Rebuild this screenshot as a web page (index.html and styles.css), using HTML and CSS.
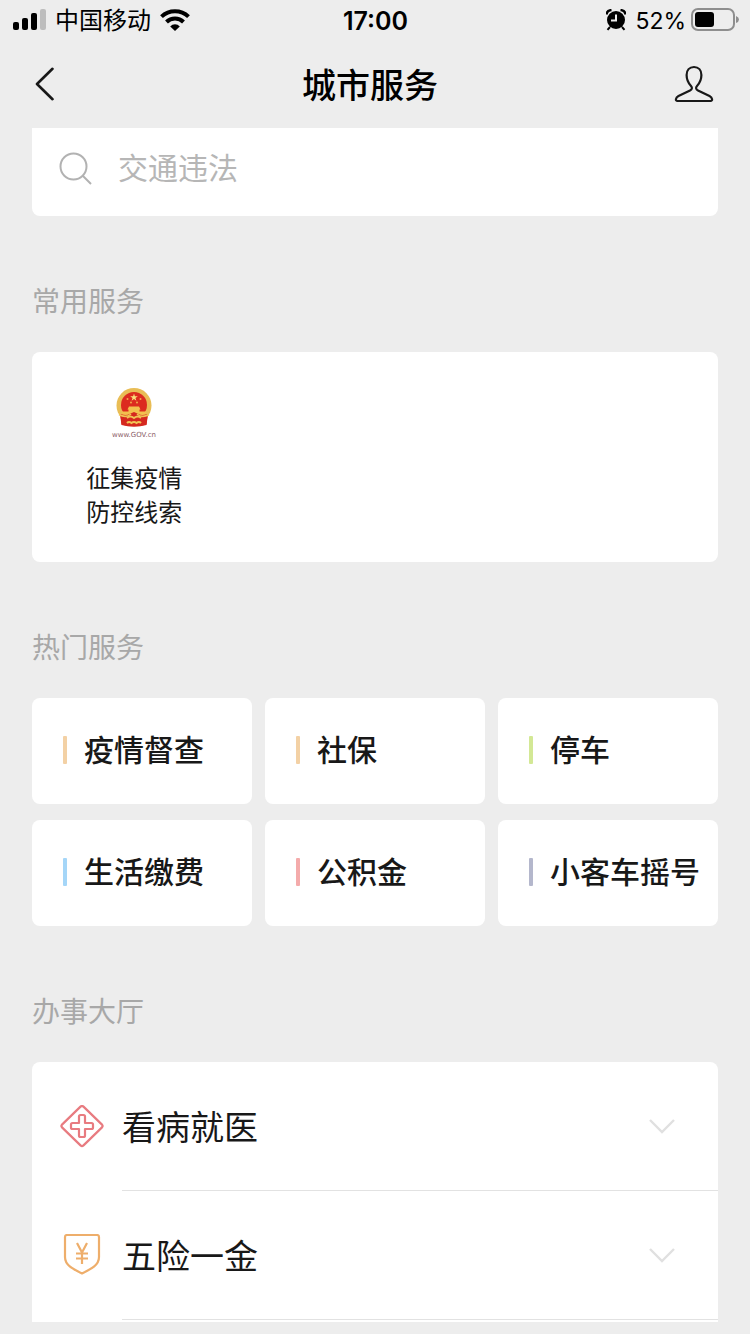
FILE: index.html
```html
<!DOCTYPE html>
<html lang="zh-CN">
<head>
    <meta charset="UTF-8">
    <meta name="viewport" content="width=device-width, initial-scale=1.0">
    <title>城市服务</title>
    <link rel="stylesheet" href="styles.css">
</head>
<body>
    <!-- Status bar -->
    <div class="status-bar">
        <div class="status-left">
            <svg class="signal" width="34" height="24" viewBox="0 0 34 24" aria-hidden="true">
                <rect x="1" y="14" width="6" height="8" rx="2"/>
                <rect x="10" y="10" width="6" height="12" rx="2"/>
                <rect x="19" y="5" width="6" height="17" rx="2"/>
                <rect x="28" y="1" width="6" height="21" rx="2" fill="#bdbdbd"/>
            </svg>
            <span class="carrier">中国移动</span>
            <svg width="30" height="22" viewBox="0 0 30 22" fill="none" stroke="#000" stroke-width="4" aria-hidden="true">
                <path d="M1.500 7.600a19.500 19.500 0 0 1 27 0"/>
                <path d="M6.500 13a12 12 0 0 1 17 0"/>
                <path d="M10.200 17.400a6.600 6.600 0 0 1 9.600 0L15 22z" fill="#000" stroke="none"/>
            </svg>
        </div>
        <div class="status-time">17:00</div>
        <div class="status-right">
            <svg width="20" height="22" viewBox="0 0 20 22" aria-hidden="true">
                <circle cx="10" cy="11" r="9"/>
                <path d="M.8 5.500Q.5 1.500 5.500 1M19.200 5.500Q19.500 1.500 14.500 1" fill="none" stroke="#000" stroke-width="2.400"/>
                <path d="M4 18l-2.500 2.800M16 18l2.500 2.800" fill="none" stroke="#000" stroke-width="2"/>
                <path d="M10 5.500v6H5" fill="none" stroke="#ededed" stroke-width="2"/>
            </svg>
            <span class="battery-text">52%</span>
            <svg width="48" height="24" viewBox="0 0 48 24" aria-hidden="true">
                <rect x="1" y="1" width="42" height="21" rx="6" fill="none" stroke="#8e8e8e" stroke-width="2"/>
                <rect x="4" y="4" width="19" height="15" rx="3"/>
                <path d="M45 8q3 1.200 3 3.500t-3 3.500z" fill="#8e8e8e"/>
            </svg>
        </div>
    </div>

    <!-- Navigation bar -->
    <header class="nav-bar">
        <button class="nav-btn back" type="button" aria-label="返回">
            <svg width="20" height="34" viewBox="0 0 20 34" fill="none" stroke="#181818" stroke-width="2.600" stroke-linecap="round" stroke-linejoin="round">
                <path d="M18.500 1.800L3 17l15.500 15.200"/>
            </svg>
        </button>
        <h1 class="nav-title">城市服务</h1>
        <button class="nav-btn" type="button" aria-label="我的">
            <svg width="40" height="38" viewBox="0 0 40 38" fill="none" stroke="#181818" stroke-width="2.200" stroke-linejoin="round">
                <path d="M20 2c-4.600 0-7.400 3.200-7.400 8 0 5 1.800 8.200 4.400 11 1.600 1.700 1 3.400-1 4.400L4.500 31C1.500 32.600 1 36 3.500 36h33c2.500 0 2-3.400-1-5L24 25.400c-2-1-2.600-2.700-1-4.400 2.600-2.800 4.400-6 4.400-11 0-4.800-2.800-8-7.400-8z"/>
            </svg>
        </button>
    </header>

    <main class="page">
        <label class="search">
            <svg width="34" height="34" viewBox="0 0 34 34" fill="none" stroke="#b2b2b2" stroke-width="2" aria-hidden="true">
                <circle cx="15.500" cy="15.500" r="13"/>
                <path d="M24.500 24.500L33 33"/>
            </svg>
            <input class="search-input" type="search" placeholder="交通违法" aria-label="搜索服务">
        </label>

        <h2 class="section-title">常用服务</h2>
        <div class="common">
            <a class="common-item" href="#">
                <!-- National emblem -->
                <svg width="48" height="50" viewBox="0 0 48 50" aria-hidden="true">
                    <path d="M10 27h28l-1.500 9.500q-12.500 4-25 0z" fill="#d5281f"/>
                    <circle cx="24" cy="17.500" r="17.500" fill="#e9bd55"/>
                    <circle cx="24" cy="17" r="13" fill="#dc2b1f"/>
                    <path d="M24 5.500l.9 2.700h2.900l-2.300 1.700.9 2.800-2.400-1.700-2.400 1.700.9-2.800-2.300-1.700h2.900z" fill="#f9df7c"/>
                    <g fill="#f0a94a">
                        <circle cx="17.500" cy="11" r="1"/>
                        <circle cx="21" cy="14.500" r="1"/>
                        <circle cx="27" cy="14.500" r="1"/>
                        <circle cx="30.500" cy="11" r="1"/>
                    </g>
                    <path d="M19 18.500h10l1.500 3h-1v2H36v4H12v-4h6.500v-2h-1z" fill="#f3c04e"/>
                    <path d="M10.500 26q6 2 9 0l4.500-2 4.500 2q3 2 9 0l-1 11q-12.500 3-25 0z" fill="#d5281f"/>
                    <path d="M9 26.500q7 4 12-.5M39 26.500q-7 4-12-.5" fill="none" stroke="#f0c455" stroke-width="1.500"/>
                    <path d="M17 30q3-3 7 0 4-3 7 0M17 35q2-2 4.500 0 2.500-2 5 0 2.500-2 4.500 0" fill="none" stroke="#f0c455" stroke-width="2"/>
                    <text class="emblem-text" x="24" y="49" text-anchor="middle">www.GOV.cn</text>
                </svg>
                <span class="common-name">征集疫情<br>防控线索</span>
            </a>
        </div>

        <h2 class="section-title">热门服务</h2>
        <div class="hot">
            <a class="hot-item orange" href="#">疫情督查</a>
            <a class="hot-item orange" href="#">社保</a>
            <a class="hot-item green" href="#">停车</a>
            <a class="hot-item blue" href="#">生活缴费</a>
            <a class="hot-item red" href="#">公积金</a>
            <a class="hot-item purple" href="#">小客车摇号</a>
        </div>

        <h2 class="section-title">办事大厅</h2>
        <div class="hall">
            <button class="hall-item" type="button" aria-expanded="false">
                <svg width="44" height="44" viewBox="0 0 44 44" fill="none" stroke="#e87b80" stroke-width="2.200" stroke-linejoin="round" aria-hidden="true">
                    <path d="M20.500 1.600Q22 .4 23.500 1.600L42 19.600Q43.200 21 42 22.400L23.500 40.400Q22 41.600 20.500 40.400L2 22.400Q.8 21 2 19.600z"/>
                    <path d="M20.500 10h3q1.500 0 1.500 1.500v6.500h6.500q1.500 0 1.500 1.500v3q0 1.500-1.500 1.500h-6.500v6.500q0 1.500-1.500 1.500h-3q-1.500 0-1.500-1.500v-6.500h-6.500q-1.500 0-1.500-1.500v-3q0-1.500 1.500-1.500h6.500v-6.500q0-1.500 1.500-1.500z"/>
                </svg>
                <span class="hall-row">
                    <span class="hall-name">看病就医</span>
                    <svg width="28" height="16" viewBox="0 0 28 16" fill="none" stroke="#e0e0e0" stroke-width="2.400" aria-hidden="true">
                        <path d="M2 2l12 12L26 2"/>
                    </svg>
                </span>
            </button>
            <button class="hall-item" type="button" aria-expanded="false">
                <svg width="44" height="44" viewBox="0 0 44 44" fill="none" stroke="#eeae6b" stroke-width="2.200" stroke-linejoin="round" aria-hidden="true">
                    <path d="M7 1h30q2 0 2 2v20c0 8-7 11.500-17 16.500C12 34.500 5 31 5 23V3q0-2 2-2z"/>
                    <path d="M17 9l5 9.500L27 9M22 18.500V30M16 19.500h12M16 24.500h12"/>
                </svg>
                <span class="hall-row">
                    <span class="hall-name">五险一金</span>
                    <svg width="28" height="16" viewBox="0 0 28 16" fill="none" stroke="#e0e0e0" stroke-width="2.400" aria-hidden="true">
                        <path d="M2 2l12 12L26 2"/>
                    </svg>
                </span>
            </button>
        </div>
    </main>
</body>
</html>
```
FILE: styles.css
```css
/* Basic reset */
* {
    margin: 0;
    padding: 0;
    box-sizing: border-box;
}

body {
    background-color: #ededed;
    color: #181818;
    font-family: Inter, "Noto Sans CJK SC", sans-serif;
}

a {
    color: inherit;
    text-decoration: none;
}

button {
    border: none;
    background: none;
    color: inherit;
    font-family: inherit;
    cursor: pointer;
}

svg {
    display: block;
    flex-shrink: 0;
}

/* Status bar */
.status-bar {
    display: grid;
    grid-template-columns: 1fr auto 1fr;
    align-items: center;
    height: 40px;
    padding: 0 11px 0 12px;
    color: #000;
    font-size: 24px;
    line-height: 32px;
}

.status-left,
.status-right {
    display: flex;
    align-items: center;
}

.status-left {
    gap: 9px;
}

.status-right {
    justify-content: flex-end;
    gap: 5px;
}

.carrier {
    padding-top: 2px;
}

.battery-text {
    padding: 2px 0 0 4px;
    font-size: 23px;
}

.status-time {
    padding-top: 2px;
    font-size: 25px;
    font-weight: 600;
}

/* Navigation bar */
.nav-bar {
    display: flex;
    align-items: center;
    justify-content: space-between;
    height: 88px;
    padding: 0 36px 0 34px;
}

.nav-btn {
    display: flex;
    width: 40px;
}

.back {
    width: 32px;
}

.nav-title {
    padding-top: 4px;
    color: #000;
    font-size: 34px;
    font-weight: 500;
    line-height: 48px;
}

/* Page content */
.page {
    padding: 0 32px 12px;
}

.search {
    display: flex;
    align-items: center;
    gap: 26px;
    padding: 0 26px 8px;
    background-color: #fff;
    border-radius: 0 0 8px 8px;
}

.search-input {
    flex: 1;
    min-width: 0;
    height: 80px;
    border: none;
    outline: none;
    background: none;
    font-family: inherit;
    font-size: 30px;
}

.search-input::placeholder {
    color: #b6b6b6;
}

.section-title {
    padding: 66px 0 30px;
    color: #a8a8a8;
    font-size: 28px;
    font-weight: 400;
    line-height: 40px;
}

/* Common services */
.common {
    display: grid;
    grid-template-columns: repeat(3, 1fr);
    padding: 36px 0 32px;
    background-color: #fff;
    border-radius: 8px;
}

.common-item {
    display: flex;
    flex-direction: column;
    align-items: center;
    gap: 24px;
    padding-right: 24px;
}

.common-name {
    font-size: 24px;
    line-height: 34px;
}

.emblem-text {
    fill: #8a5c66;
    font-family: "DejaVu Sans", sans-serif;
    font-size: 7px;
}

/* Hot services */
.hot {
    display: grid;
    grid-template-columns: repeat(3, 1fr);
    gap: 16px 13px;
}

.hot-item {
    display: flex;
    align-items: center;
    gap: 17px;
    height: 106px;
    padding: 0 0 2px 31px;
    background-color: #fff;
    border-radius: 8px;
    font-size: 30px;
    font-weight: 500;
    line-height: 44px;
    white-space: nowrap;
}

/* Colored mark before the name */
.hot-item::before {
    content: "";
    width: 4px;
    height: 28px;
    border-radius: 1px;
    background-color: currentColor;
}

.orange::before {
    background-color: #f3d1a5;
}

.green::before {
    background-color: #d3e895;
}

.blue::before {
    background-color: #a5d6f8;
}

.red::before {
    background-color: #f4abab;
}

.purple::before {
    background-color: #b4b7cc;
}

/* Service hall list */
.hall {
    padding-bottom: 2px;
    background-color: #fff;
    border-radius: 8px 8px 0 0;
}

.hall-item {
    display: flex;
    align-items: center;
    gap: 18px;
    width: 100%;
    padding-left: 28px;
    text-align: left;
}

.hall-row {
    display: flex;
    flex: 1;
    align-items: center;
    justify-content: space-between;
    height: 129px;
    padding-right: 42px;
    border-bottom: 1px solid #e2e2e2;
}

.hall-name {
    padding-top: 4px;
    font-size: 34px;
    line-height: 48px;
}
```
